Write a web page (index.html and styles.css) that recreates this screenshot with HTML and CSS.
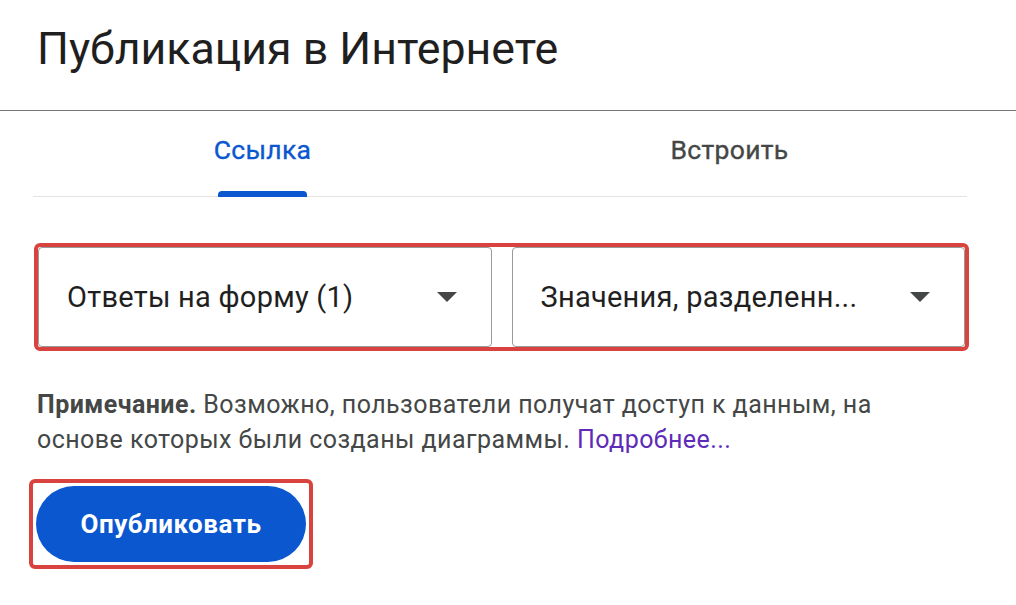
FILE: index.html
```html
<!DOCTYPE html>
<html lang="ru">
<head>
<meta charset="utf-8">
<title>Публикация в Интернете</title>
<link rel="stylesheet" href="styles.css">
</head>
<body>
<header class="header">
  <h1 class="title">Публикация в Интернете</h1>
</header>
<main class="content">
  <nav class="tabs">
    <div class="tab tab-active"><span class="tab-label">Ссылка</span><span class="tab-bar"></span></div>
    <div class="tab"><span class="tab-label">Встроить</span></div>
  </nav>
  <div class="selects">
    <div class="select">
      <span class="select-text">Ответы на форму (1)</span>
      <svg class="arrow" width="20" height="10" viewBox="0 0 20 10"><path d="M0 0h20L10 10z" fill="#444746"/></svg>
    </div>
    <div class="select">
      <span class="select-text">Значения, разделенн...</span>
      <svg class="arrow" width="20" height="10" viewBox="0 0 20 10"><path d="M0 0h20L10 10z" fill="#444746"/></svg>
    </div>
  </div>
  <p class="note"><b>Примечание.</b> Возможно, пользователи получат доступ к данным, на основе которых были созданы диаграммы. <a class="link" href="#">Подробнее...</a></p>
  <div class="btn-wrap">
    <button class="btn">Опубликовать</button>
  </div>
</main>
</body>
</html>
```
FILE: styles.css
```css
* { box-sizing: border-box; }
body {
  margin: 0;
  background: #fff;
  font-family: Roboto, "Noto Sans", sans-serif;
  color: #1f1f1f;
}
.header {
  height: 111px;
  border-bottom: 1px solid #757575;
  padding: 24px 0 0 37px;
}
.title {
  margin: 0;
  font-size: 44.7px;
  font-weight: 400;
  line-height: 50px;
  color: #1f1f1f;
}
.content {
  padding: 0 49px 0 33px;
}
.tabs {
  display: grid;
  grid-template-columns: 1fr 1fr;
  height: 86px;
  border-bottom: 1px solid #e3e3e3;
}
.tab {
  display: flex;
  flex-direction: column;
  align-items: center;
  justify-content: center;
  position: relative;
  padding-right: 8px;
}
.tab-label {
  font-size: 26.5px;
  font-weight: 400;
  -webkit-text-stroke: 0.35px currentColor;
  letter-spacing: 0.3px;
  color: #444746;
  line-height: 30px;
  margin-bottom: 8px;
}
.tab-active .tab-label { color: #0b57d0; }
.tab-bar {
  position: absolute;
  bottom: -1px;
  width: 89px;
  height: 6px;
  background: #0b57d0;
  border-radius: 4px 4px 0 0;
}
.selects {
  margin-top: 46px;
  margin-left: 1px;
  width: 935px;
  display: grid;
  grid-template-columns: 1fr 1fr;
  gap: 20px;
  border: 4px solid #d8423f;
  border-radius: 6px;
  height: 108px;
}
.select {
  border: 1px solid #9a9a9a;
  border-radius: 4px;
  display: flex;
  align-items: center;
  justify-content: space-between;
  padding: 0 34px 0 28px;
}
.select-text {
  font-size: 29px;
  letter-spacing: 0.25px;
  color: #1f1f1f;
}
.arrow { display: block; margin-top: 0; }
.note {
  margin: 36px 0 0 4px;
  max-width: 900px;
  font-size: 25px;
  letter-spacing: 0.45px;
  line-height: 35px;
  color: #444746;
}
.note b { color: #444746; font-weight: 700; }
.link { color: #5e2bb8; text-decoration: none; }
.btn-wrap {
  margin-top: 22px;
  margin-left: -4px;
  width: 284px;
  height: 90px;
  border: 4px solid #d8423f;
  border-radius: 6px;
  padding: 3px;
}
.btn {
  width: 100%;
  height: 100%;
  border: none;
  border-radius: 40px;
  background: #0b57d0;
  color: #fff;
  font-family: Roboto, "Noto Sans", sans-serif;
  font-size: 26px;
  letter-spacing: 0.5px;
  font-weight: 700;
  padding: 0;
}
```
